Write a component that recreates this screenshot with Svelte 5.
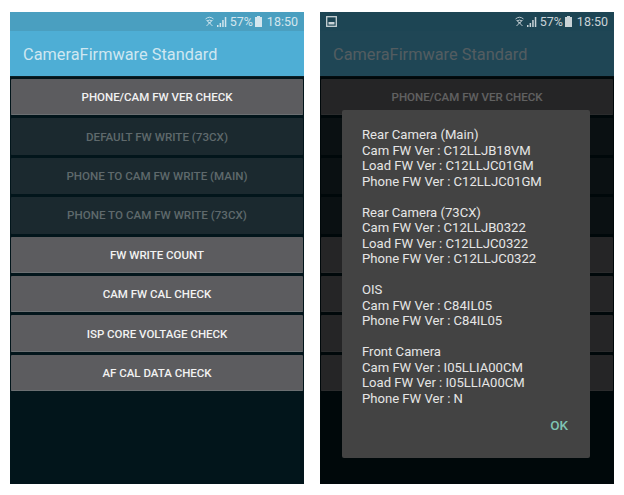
<script>
  const buttons = [
    { label: "PHONE/CAM FW VER CHECK", enabled: true },
    { label: "DEFAULT FW WRITE (73CX)", enabled: false },
    { label: "PHONE TO CAM FW WRITE (MAIN)", enabled: false },
    { label: "PHONE TO CAM FW WRITE (73CX)", enabled: false },
    { label: "FW WRITE COUNT", enabled: true },
    { label: "CAM FW CAL CHECK", enabled: true },
    { label: "ISP CORE VOLTAGE CHECK", enabled: true },
    { label: "AF CAL DATA CHECK", enabled: true }
  ];

  const groups = [
    ["Rear Camera (Main)", "Cam FW Ver : C12LLJB18VM", "Load FW Ver : C12LLJC01GM", "Phone FW Ver : C12LLJC01GM"],
    ["Rear Camera (73CX)", "Cam FW Ver : C12LLJB0322", "Load FW Ver : C12LLJC0322", "Phone FW Ver : C12LLJC0322"],
    ["OIS", "Cam FW Ver : C84IL05", "Phone FW Ver : C84IL05"],
    ["Front Camera", "Cam FW Ver : I05LLIA00CM", "Load FW Ver : I05LLIA00CM", "Phone FW Ver : N"]
  ];
</script>

{#snippet status()}
  <svg class="wifi" width="9" height="11" viewBox="0 0 9 11">
    <path d="M0.5 3 Q4.5 -0.5 8.5 3 M2 5 Q4.5 3 7 5 M3.2 7 Q4.5 6 5.8 7 M1.5 10 L7.5 4 M7.5 10 L1.5 4" fill="none" stroke="currentColor" stroke-width="0.9" />
  </svg>
  <svg class="signal" width="10" height="10" viewBox="0 0 10 10">
    <path d="M0 10 H1.5 V8 H0 Z M2.6 10 H4.1 V6 H2.6 Z M5.2 10 H6.7 V3 H5.2 Z M7.8 10 H9.3 V0 H7.8 Z" fill="currentColor" />
  </svg>
  <span class="pct">57%</span>
  <svg class="battery" width="7" height="11" viewBox="0 0 7 11">
    <path d="M2 0 H5 V1 H7 V11 H0 V1 H2 Z" fill="currentColor" />
  </svg>
  <span class="time">18:50</span>
{/snippet}

<!-- behind the dialog only the first label can be seen -->
{#snippet screen(labelCount)}
  <div class="appbar">CameraFirmware Standard</div>
  <div class="list">
    {#each buttons as b, i}
      <div class="btn" class:off={!b.enabled}>{i < labelCount ? b.label : ""}</div>
    {/each}
  </div>
{/snippet}

<div class="page">
  <section class="phone">
    <div class="statusbar">
      {@render status()}
    </div>
    {@render screen(buttons.length)}
  </section>

  <section class="phone dimmed">
    <div class="statusbar">
      <svg class="pic" width="11" height="11" viewBox="0 0 11 11">
        <rect x="0.7" y="0.7" width="9.6" height="9.6" fill="none" stroke="currentColor" stroke-width="1.3" />
        <rect x="2.5" y="6" width="6" height="2.5" fill="currentColor" />
      </svg>
      <span class="spacer"></span>
      {@render status()}
    </div>
    <div class="under">
      {@render screen(1)}
      <div class="scrim"></div>
    </div>
    <div class="dialog">
      {#each groups as group}
        <div class="group">
          {#each group as line}
            <div>{line}</div>
          {/each}
        </div>
      {/each}
      <div class="actions"><span class="ok">OK</span></div>
    </div>
  </section>
</div>

<style>
  :global(body) {
    background: #fff;
  }

  .page {
    display: flex;
    gap: 16px;
    padding: 12px 0 0 10px;
    width: 624px;
    height: 495px;
    box-sizing: border-box;
    overflow: hidden;
    font-family: Roboto, "Liberation Sans", sans-serif;
  }

  .phone {
    position: relative;
    width: 294px;
    height: 472px;
    background: #02151b;
    display: flex;
    flex-direction: column;
    flex: none;
  }

  .statusbar {
    height: 19px;
    background: #4a9fc0;
    color: #d3e6ee;
    display: flex;
    align-items: center;
    justify-content: flex-end;
    padding: 0 6px;
    font-size: 12.5px;
    flex: none;
  }

  .wifi {
    margin-right: 3px;
  }

  .signal {
    margin-right: 3px;
  }

  .battery {
    margin: 0 5px 0 2px;
  }

  .spacer {
    flex: 1;
  }

  .appbar {
    height: 46px;
    box-sizing: border-box;
    background: #4eaed5;
    color: #cfe7f1;
    font-size: 16.3px;
    letter-spacing: 0.03px;
    padding: 14px 0 0 13px;
    border-bottom: 1px solid #0c2026;
    flex: none;
  }

  .list {
    display: flex;
    flex-direction: column;
    gap: 3px;
    padding: 2px 1px 0;
  }

  .btn {
    height: 36.4px;
    flex: none;
    display: flex;
    align-items: center;
    justify-content: center;
    padding-top: 1px;
    background: #5c5c5f;
    border-radius: 1px;
    border-bottom: 1px solid #6b6f72;
    box-sizing: border-box;
    color: #f2f2f2;
    font-size: 11.5px;
    font-weight: 500;
  }

  .btn.off {
    background: #1b292f;
    border-bottom-color: #1b292f;
    color: #5f696c;
    font-size: 11.6px;
  }

  .under {
    position: relative;
    flex: 1;
  }

  .scrim {
    position: absolute;
    inset: 0;
    background: rgba(0, 0, 0, 0.6);
  }

  .dimmed .statusbar {
    background: #1d4554;
    color: #c9d3d7;
  }

  .dialog {
    position: absolute;
    left: 22px;
    top: 98px;
    width: 248px;
    height: 348px;
    box-sizing: border-box;
    padding: 17px 20px 0;
    background: #434343;
    border-radius: 2px;
    color: #e6e6e6;
    font-size: 13.1px;
    line-height: 15.5px;
    display: flex;
    flex-direction: column;
    gap: 15.5px;
  }

  .actions {
    display: flex;
    justify-content: flex-end;
    padding: 0 2px 0 0;
    margin-top: -4px;
  }

  .ok {
    color: #7fc4b4;
    font-size: 13.5px;
    font-weight: 500;
  }
</style>
